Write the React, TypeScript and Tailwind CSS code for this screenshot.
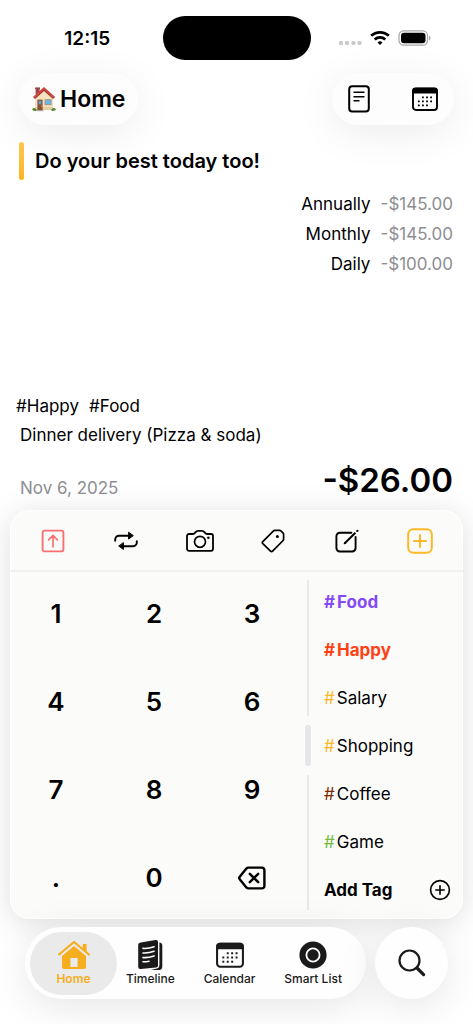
import React from 'react';

const stroke = {
  fill: 'none',
  stroke: 'currentColor',
  strokeLinecap: 'round' as const,
  strokeLinejoin: 'round' as const,
};

function HouseEmoji() {
  return (
    <svg width="24" height="26" viewBox="0 0 24 26" aria-hidden="true">
      <path d="M3.6 2h4v6h-4z" fill="#a9434a" />
      <path d="M3.2 1.4h4.8v1.8H3.2z" fill="#8d4a4a" />
      <path d="M3 11.5 12 3.4l9 8.1V24H3z" fill="#f5e3c0" />
      <path d="M3 21h18v3H3z" fill="#e3cda2" />
      <path d="M12 .9 23.2 11l-1.5 1.4L12 3.8l-9.500 8.600L.9 11z" fill="#d0443c" />
      <path d="M12 3.600 2.500 12.300l.5.7L12 4.900l9.100 8.100.5-.7z" fill="#8e2b2b" />
      <path d="M5.400 13.600h5.200V24H5.400z" fill="#8d4f35" />
      <path d="M6.600 14.800h2.800v3.600H6.600z" fill="#5f9fcf" />
      <circle cx="9.600" cy="20" r=".6" fill="#f2c14b" />
      <path d="M12.600 13.200h7v6h-7z" fill="#b98a5f" />
      <path d="M13.300 13.900h5.600v4.600h-5.600z" fill="#67b5ea" />
      <path d="M4.600 24h6.800v1.200H4.600z" fill="#a9a29a" />
      <circle cx="1.900" cy="23.300" r="1.500" fill="#5d8f31" />
      <circle cx="3.400" cy="23.900" r="1.100" fill="#49772a" />
      <circle cx="22.100" cy="23.300" r="1.500" fill="#5d8f31" />
      <circle cx="20.500" cy="23.900" r="1.100" fill="#49772a" />
    </svg>
  );
}

function NoteIcon() {
  return (
    <svg width="22" height="28" viewBox="0 0 22 28" {...stroke} strokeWidth="2" aria-hidden="true">
      <rect x="1.200" y="1.200" width="19.600" height="25.400" rx="3" />
      <path d="M6 7.200h10M6 11.700h10M6 15.700h5" strokeWidth="1.400" />
    </svg>
  );
}

function CalendarIcon({ size }: { size: number }) {
  return (
    <svg width={size} height={size} viewBox="0 0 26 26" aria-hidden="true">
      <rect x="1" y="2.600" width="24" height="21.400" rx="3" fill="none" stroke="currentColor" strokeWidth="1.900" />
      <path d="M.1 5a3.400 3.400 0 0 1 3.400-3.400h19A3.400 3.400 0 0 1 25.900 5v2.600H.1z" fill="currentColor" />
      <path
        d="M10 10.400h1.800v1.800H10zM14.100 10.400h1.800v1.800h-1.800zM18.200 10.400H20v1.800h-1.800zM5.900 14.400h1.800v1.800H5.900zM10 14.400h1.800v1.800H10zM14.100 14.400h1.800v1.800h-1.800zM18.200 14.400H20v1.800h-1.800zM5.900 18.400h1.800v1.800H5.900zM10 18.400h1.800v1.800H10zM14.100 18.400h1.800v1.800h-1.800z"
        fill="currentColor"
      />
    </svg>
  );
}

const tools = [
  {
    label: 'Expense',
    color: 'text-[#fa7072]',
    icon: (
      <svg width="24" height="24" viewBox="0 0 24 24" {...stroke} strokeWidth="1.900" aria-hidden="true">
        <rect x="1.600" y="1.600" width="20.800" height="20.800" rx="2.200" />
        <path d="M12 17.800V6.600M7.600 10.800 12 6.300l4.400 4.500" strokeWidth="1.700" />
      </svg>
    ),
  },
  {
    label: 'Repeat',
    color: 'text-black',
    icon: (
      <svg width="24" height="20" viewBox="0 0 24 20" {...stroke} strokeWidth="1.900" aria-hidden="true">
        <path d="M1.200 9.800V8.400a3.600 3.600 0 0 1 3.600-3.600h10M22.800 10.200v1.400a3.600 3.600 0 0 1-3.600 3.600H9" />
        <path d="M14.600 1.600v6.400l4.400-3.200zM9.400 12v6.400L5 15.200z" fill="currentColor" strokeWidth="1" />
      </svg>
    ),
  },
  {
    label: 'Camera',
    color: 'text-black',
    icon: (
      <svg width="28" height="24" viewBox="0 0 28 24" {...stroke} strokeWidth="1.800" aria-hidden="true">
        <path d="M3 5h3.800c1.500 0 1.800-.5 2.600-1.600.8-1.100 1.400-1.500 2.700-1.500h3.800c1.300 0 1.900.4 2.700 1.500.8 1.100 1.100 1.600 2.600 1.600H25a2 2 0 0 1 2 2v12.800a2 2 0 0 1-2 2H3a2 2 0 0 1-2-2V7a2 2 0 0 1 2-2z" />
        <circle cx="14" cy="12.800" r="5.500" strokeWidth="1.700" />
        <circle cx="22.400" cy="8.800" r="1.300" fill="currentColor" stroke="none" />
      </svg>
    ),
  },
  {
    label: 'Tags',
    color: 'text-black',
    icon: (
      <svg width="24" height="24" viewBox="0 0 24 24" {...stroke} strokeWidth="1.700" aria-hidden="true">
        <path d="M13.800 1.400h4.900a1.800 1.800 0 0 1 1.200.5l2.200 2.200a1.800 1.800 0 0 1 .5 1.200v4.900a1.800 1.800 0 0 1-.5 1.300L11.600 22.200a1.500 1.500 0 0 1-2.100 0l-7.700-7.500a1.500 1.500 0 0 1 0-2.100L12.500 1.900a1.800 1.800 0 0 1 1.300-.5z" />
        <circle cx="16.400" cy="7.600" r="1.500" fill="currentColor" stroke="none" />
      </svg>
    ),
  },
  {
    label: 'Memo',
    color: 'text-black',
    icon: (
      <svg width="24" height="24" viewBox="0 0 24 24" {...stroke} strokeWidth="1.900" aria-hidden="true">
        <path d="M16.400 3.800H4.800a3.400 3.400 0 0 0-3.400 3.400v11.900a3.400 3.400 0 0 0 3.400 3.400h12.400a3.400 3.400 0 0 0 3.400-3.400V8" />
        <path d="M9.800 14.200 20.400 3.800" strokeWidth="2" strokeLinecap="butt" />
        <path d="m9.300 14.700.5-1.300.8.8z" strokeWidth="1.200" />
        <path d="m22.200 2 .3-.3" strokeWidth="2" />
      </svg>
    ),
  },
  {
    label: 'Add',
    color: 'text-[#fdb827]',
    icon: (
      <svg width="26" height="26" viewBox="0 0 26 26" {...stroke} strokeWidth="2" aria-hidden="true">
        <rect x="1.200" y="1.200" width="23.600" height="23.600" rx="5" />
        <path d="M13 7v12M7 13h12" />
      </svg>
    ),
  },
];

const totals = [
  { label: 'Annually', value: '-$145.00' },
  { label: 'Monthly', value: '-$145.00' },
  { label: 'Daily', value: '-$100.00' },
];

const keys = ['1', '2', '3', '4', '5', '6', '7', '8', '9', '.', '0'];

const tags = [
  { name: 'Food', hash: 'text-[#8549f7]', text: 'font-bold text-[#8549f7]' },
  { name: 'Happy', hash: 'text-[#ff4015]', text: 'font-bold text-[#ff4015]' },
  { name: 'Salary', hash: 'text-[#fbb82b]', text: 'text-black' },
  { name: 'Shopping', hash: 'text-[#fbb82b]', text: 'text-black' },
  { name: 'Coffee', hash: 'text-[#7c2a00]', text: 'text-black' },
  { name: 'Game', hash: 'text-[#76bb40]', text: 'text-black' },
];

const links = [
  {
    label: 'Timeline',
    icon: (
      <svg width="26" height="32" viewBox="0 0 26 32" aria-hidden="true">
        <path d="M3.800 3.400 18.600 1.100q2.400-.3 2.400 1.900v23.400q0 1.800-2 2.100L3.800 29.900q-2.600.3-2.600-2V5.600q0-1.900 2.600-2.200z" fill="#1a1a1a" />
        <path d="M22.400 3.600q2.900.3 2.900 3v21q0 3.300-3.200 3.400h-8.500l6.500-1.400q2.300-.6 2.300-3z" fill="#1a1a1a" />
        <path d="M6 9.400q5.500.4 11-1.700M6 14q5.500.4 11-1.700M6 18.600q5.500.4 11-1.700M6 22.800q3 .1 6-.6" fill="none" stroke="#fff" strokeWidth="1.600" strokeLinecap="round" />
      </svg>
    ),
  },
  { label: 'Calendar', icon: <CalendarIcon size={28} /> },
  {
    label: 'Smart List',
    icon: (
      <svg width="28" height="28" viewBox="0 0 28 28" aria-hidden="true">
        <circle cx="14" cy="14" r="13.600" fill="#1a1a1a" />
        <circle cx="14" cy="14" r="6.600" fill="none" stroke="#fff" strokeWidth="1.800" />
      </svg>
    ),
  },
];

export default function App() {
  return (
    <div className="flex min-h-screen flex-col bg-white font-['Inter','Liberation_Sans',sans-serif] text-black">
      <div className="grid h-[60px] grid-cols-[1fr_148px_1fr] pt-4">
        <time className="flex items-center justify-center pt-[2px] pl-3 text-[19px] leading-6 font-semibold">12:15</time>
        <div className="h-11 rounded-full bg-black" />
        <div className="flex items-center gap-2 pl-[27px]">
          <svg width="24" height="6" viewBox="0 0 24 6" className="mt-3" fill="#cbcbcb" aria-hidden="true">
            <rect x="1" y="0" width="4" height="4" rx="1.200" />
            <rect x="7" y="0" width="4" height="4" rx="1.200" />
            <rect x="13.500" y="0" width="4" height="4" rx="1.200" />
            <rect x="19.500" y="0" width="4" height="4" rx="1.200" />
          </svg>
          <svg width="20" height="16" viewBox="0 0 20 16" {...stroke} strokeLinecap="butt" strokeWidth="2.700" aria-hidden="true">
            <path d="M1.200 5.800a12.800 12.800 0 0 1 17.600 0" />
            <path d="M4.700 9.500a7.700 7.700 0 0 1 10.600 0" />
            <path d="m10 15-2.500-2.600a3.600 3.600 0 0 1 5 0z" fill="currentColor" stroke="none" />
          </svg>
          <svg width="33" height="16" viewBox="0 0 33 16" aria-hidden="true">
            <rect x="1" y=".8" width="28.500" height="14.400" rx="4.600" fill="none" stroke="#a6a6a6" strokeWidth="1.200" />
            <rect x="3" y="2.700" width="24.500" height="10.600" rx="3" fill="#000" />
            <path d="M31 5.600q1.600.7 1.600 2.400T31 10.400z" fill="#a6a6a6" />
          </svg>
        </div>
      </div>

      <header className="mt-[13px] flex justify-between px-[19px]">
        <button className="flex h-[52px] items-center gap-1 rounded-full bg-[#fdfdfd] px-[13px] shadow-[0_8px_40px_rgba(0,0,0,0.08)]">
          <HouseEmoji />
          <span className="text-[23px] leading-7 font-semibold">Home</span>
        </button>
        <div className="flex h-[52px] w-[122px] items-center justify-between rounded-full bg-[#fdfdfd] px-[16px] shadow-[0_8px_40px_rgba(0,0,0,0.08)]">
          <button aria-label="Notes">
            <NoteIcon />
          </button>
          <button aria-label="Calendar view">
            <CalendarIcon size={26} />
          </button>
        </div>
      </header>

      <section className="mt-[17px] flex items-center gap-[11px] px-[19px]">
        <div className="h-[38px] w-[5px] rounded-sm bg-linear-to-b from-[#fdc750] to-[#fdb51c]" />
        <p className="text-[20px] leading-6 font-semibold">Do your best today too!</p>
      </section>

      <dl className="mt-[9px] flex flex-col px-5 text-[17px] leading-[30px]">
        {totals.map((t) => (
          <div key={t.label} className="flex justify-end gap-[10px]">
            <dt>{t.label}</dt>
            <dd className="text-[#8e8e93]">{t.value}</dd>
          </div>
        ))}
      </dl>

      <section className="mt-auto px-5 pt-8">
        <div className="-ml-1 flex gap-[10px] text-[17px] leading-[29px]">
          <span>#Happy</span>
          <span>#Food</span>
        </div>
        <p className="text-[17px] leading-[29px]">Dinner delivery (Pizza &amp; soda)</p>
        <div className="mt-2 flex items-center justify-between">
          <time className="pt-4 text-[17px] leading-6 text-[#8e8e93]">Nov 6, 2025</time>
          <strong className="text-[33px] leading-[44px] font-semibold">-$26.00</strong>
        </div>
      </section>

      <main className="mx-[10px] mt-2 rounded-[20px] bg-[#fbfbfa] shadow-[inset_0_0_0_1px_rgba(255,255,255,0.9),0_4px_32px_rgba(0,0,0,0.13)]">
        <div className="grid h-[62px] grid-cols-6 items-center border-b-2 border-[#f2f2f2] px-[6px] pt-[2px]">
          {tools.map((t) => (
            <button key={t.label} aria-label={t.label} className={`flex justify-center ${t.color}`}>
              {t.icon}
            </button>
          ))}
        </div>
        <div className="flex">
          <div className="grid grow-2 basis-0 grid-cols-3 gap-x-[6px] gap-y-[5px]">
            {keys.map((k) => (
              <button key={k} className="h-[83px] text-[26px] leading-8 font-semibold">
                {k}
              </button>
            ))}
            <button aria-label="Delete" className="flex h-[83px] items-center justify-center">
              <svg width="28" height="24" viewBox="0 0 28 24" {...stroke} strokeWidth="2.400" aria-hidden="true">
                <path d="M10.300 1.600H24a2.400 2.400 0 0 1 2.400 2.400v16a2.400 2.400 0 0 1-2.400 2.400H10.300a2.400 2.400 0 0 1-1.700-.7L1.900 13.400a2 2 0 0 1 0-2.800l6.700-8.300a2.400 2.400 0 0 1 1.700-.7z" />
                <path d="m11.800 7.800 8.400 8.400M20.200 7.800l-8.400 8.400" />
              </svg>
            </button>
          </div>
          <div className="ml-[7px] flex w-[6px] flex-col items-center gap-[9px] pt-2 pb-[9px]">
            <div className="w-[2px] flex-1 bg-[#e9e9ec]" />
            <div className="h-[41px] w-[6px] rounded-sm bg-[#e5e5ea]" />
            <div className="w-[2px] flex-1 bg-[#e9e9ec]" />
          </div>
          <div className="w-[152px] pt-[6px] pr-3 pb-[5px] pl-[13px] text-[17px] leading-6">
            {tags.map((t) => (
              <button key={t.name} className={`flex h-12 w-full items-center gap-[2px] ${t.text}`}>
                <span className={t.hash}>#</span>
                <span>{t.name}</span>
              </button>
            ))}
            <button className="flex h-12 w-full items-center justify-between font-bold">
              Add Tag
              <svg width="22" height="22" viewBox="0 0 22 22" {...stroke} strokeWidth="1.600" aria-hidden="true">
                <circle cx="11" cy="11" r="9.400" />
                <path d="M11 6.800v8.400M6.800 11h8.400" />
              </svg>
            </button>
          </div>
        </div>
      </main>

      <footer className="mt-2 mb-[25px] flex gap-[9px] px-[25px]">
        <nav className="flex h-[72px] flex-1 items-center rounded-full bg-[#fefefe] pr-6 pl-[5px] text-[12px] leading-4 font-medium text-[#1a1a1a] shadow-[0_8px_40px_rgba(0,0,0,0.1)]">
          <a href="#home" className="flex h-[63px] w-[87px] flex-col items-center justify-end rounded-full bg-[#eaeaea] pb-2 font-semibold text-[#f5ae1d]">
            <span className="flex h-8 items-center">
              <svg width="34" height="30" viewBox="0 0 34 30" aria-hidden="true">
                <path d="M2 14.500 17 2l15 12.500" fill="none" stroke="currentColor" strokeWidth="2.200" strokeLinecap="round" strokeLinejoin="round" />
                <path d="M25.800 4h3.800v8l-3.800-3.200z" fill="currentColor" />
                <path d="M17 6 29 16v10.500q0 2.500-2.500 2.500h-19Q5 29 5 26.500V16z" fill="currentColor" />
                <path d="M13.400 18h7.200v9h-7.200z" fill="#eaeaea" />
              </svg>
            </span>
            Home
          </a>
          <div className="ml-[9px] flex h-[63px] flex-1 justify-between">
            {links.map((l) => (
              <a key={l.label} href={`#${l.label}`} className="flex flex-col items-center justify-end pb-2 whitespace-nowrap">
                <span className="flex h-8 items-center">{l.icon}</span>
                {l.label}
              </a>
            ))}
          </div>
        </nav>
        <button aria-label="Search" className="flex h-[72px] w-[73px] items-center justify-center rounded-full bg-[#fefefe] text-[#1a1a1a] shadow-[0_8px_40px_rgba(0,0,0,0.1)]">
          <svg width="28" height="28" viewBox="0 0 28 28" {...stroke} strokeWidth="2.200" aria-hidden="true">
            <circle cx="11.500" cy="11.500" r="10" />
            <path d="m19 19 6.600 6.600" strokeWidth="3.200" />
          </svg>
        </button>
      </footer>
    </div>
  );
}
